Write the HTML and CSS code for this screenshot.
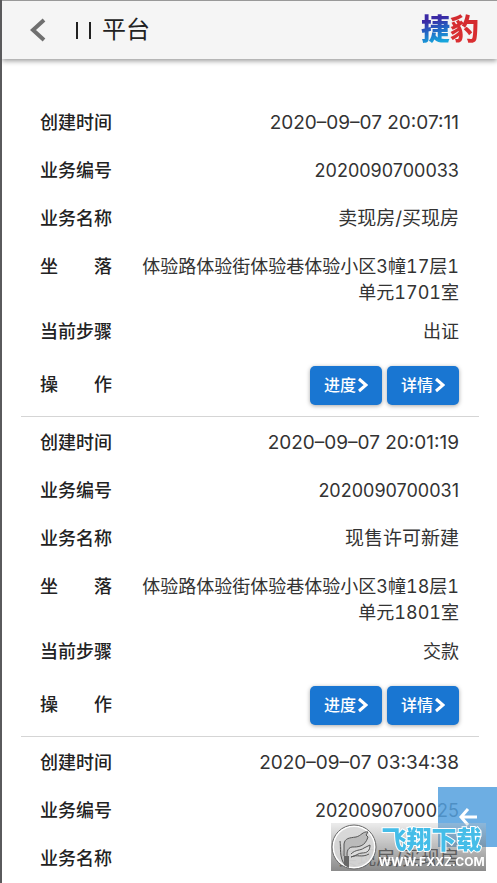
FILE: index.html
```html
<!DOCTYPE html>
<html lang="zh-CN">
<head>
<meta charset="utf-8">
<meta name="viewport" content="width=device-width, initial-scale=1">
<title>平台</title>
<link rel="stylesheet" href="styles.css">
</head>
<body>
<header class="bar">
  <button class="back" type="button" aria-label="返回">
    <svg width="16" height="24" viewBox="0 0 16 24"><path d="M14 2 L3 12 L14 22" fill="none" stroke="#707070" stroke-width="4"/></svg>
  </button>
  <h1 class="title"><svg width="18" height="18" viewBox="0 0 18 18" aria-hidden="true"><path d="M2 1V18M15 1V18" stroke="#222" stroke-width="2"/></svg>平台</h1>
  <div class="logo"><span class="logo-cool">捷</span><span class="logo-warm">豹</span></div>
</header>
<main class="list">
  <dl class="record">
    <div class="row"><dt>创建时间</dt><dd class="large">2020–09–07 20:07:11</dd></div>
    <div class="row"><dt>业务编号</dt><dd>2020090700033</dd></div>
    <div class="row"><dt>业务名称</dt><dd class="large">卖现房/买现房</dd></div>
    <div class="row address"><dt><span>坐</span><span>落</span></dt><dd>体验路体验街体验巷体验小区3幢17层1单元1701室</dd></div>
    <div class="row"><dt>当前步骤</dt><dd>出证</dd></div>
    <div class="row actions"><dt><span>操</span><span>作</span></dt><dd>
      <button class="btn" type="button">进度<svg width="10" height="16" viewBox="0 0 10 16"><path d="M1 2 L8 8 L1 14" /></svg></button>
      <button class="btn" type="button">详情<svg width="10" height="16" viewBox="0 0 10 16"><path d="M1 2 L8 8 L1 14" /></svg></button>
    </dd></div>
  </dl>
  <dl class="record">
    <div class="row"><dt>创建时间</dt><dd class="large">2020–09–07 20:01:19</dd></div>
    <div class="row"><dt>业务编号</dt><dd>2020090700031</dd></div>
    <div class="row"><dt>业务名称</dt><dd class="large">现售许可新建</dd></div>
    <div class="row address"><dt><span>坐</span><span>落</span></dt><dd>体验路体验街体验巷体验小区3幢18层1单元1801室</dd></div>
    <div class="row"><dt>当前步骤</dt><dd>交款</dd></div>
    <div class="row actions"><dt><span>操</span><span>作</span></dt><dd>
      <button class="btn" type="button">进度<svg width="10" height="16" viewBox="0 0 10 16"><path d="M1 2 L8 8 L1 14" /></svg></button>
      <button class="btn" type="button">详情<svg width="10" height="16" viewBox="0 0 10 16"><path d="M1 2 L8 8 L1 14" /></svg></button>
    </dd></div>
  </dl>
  <dl class="record">
    <div class="row"><dt>创建时间</dt><dd class="large">2020–09–07 03:34:38</dd></div>
    <div class="row"><dt>业务编号</dt><dd>2020090700025</dd></div>
    <div class="row"><dt>业务名称</dt><dd class="large">卖现房/买现房</dd></div>
  </dl>
</main>
<button class="float" type="button" aria-label="后退">
  <svg width="18" height="18" viewBox="0 0 18 18"><path d="M18 9H2M9 1L2 9L9 17" fill="none" stroke="#fff" stroke-width="3"/></svg>
</button>
<aside class="mark">
  <svg class="mark-logo" width="46" height="46" viewBox="0 0 46 46">
    <circle cx="23" cy="23" r="21" fill="#d8d8d8" fill-opacity=".9" stroke="#fff" stroke-width="2"/>
    <circle cx="23" cy="23" r="22" fill="none" stroke="#666" stroke-width="1"/>
    <path d="M9 17C10 23 8 34 14 41L17 36C15 29 16 24 21 23C27 23 34 23 37 13L35 11L37 8C32 7 30 12 25 13C18 14 14 14 13 20L13 32" fill="#bbb" stroke="#555"/>
    <path d="M20 30C25 25 29 27 33 24L39 21C39 27 36 29 31 29C27 29 25 32 20 33M20 33C26 30 31 34 38 30" fill="#ddd" stroke="#555"/>
    <path d="M13 32H18V44L13 41Z" fill="#666"/>
  </svg>
  <div class="mark-text"><strong>飞翔下载</strong><span>WWW.FXXZ.COM</span></div>
</aside>
</body>
</html>
```
FILE: styles.css
```css
* { box-sizing: border-box; }

body {
  margin: 0;
  min-height: 100vh;
  border-left: 2px solid #5a5a5c;
  background: #fff;
  color: #333;
  font: 18px/26px Inter, "Noto Sans CJK SC", sans-serif;
}

button { border: 0; padding: 0; font: inherit; }

.bar {
  display: flex;
  align-items: center;
  height: 59px;
  padding: 0 18px 0 28px;
  border-top: 1px solid #999;
  background: #f5f5f5;
  box-shadow: 0 2px 5px rgba(0, 0, 0, .4);
}

.back { display: flex; background: none; }

.title {
  display: flex;
  flex: 1;
  align-items: center;
  gap: 9px;
  margin: 0 0 0 29px;
  color: #222;
  font-size: 24px;
  font-weight: 400;
}

.logo {
  display: flex;
  font-size: 29px;
  font-weight: 900;
  line-height: 36px;
}

.logo span {
  background: linear-gradient(#d12a2f, #dc3032);
  background-clip: text;
  -webkit-background-clip: text;
  color: transparent;
}

.logo .logo-cool {
  background-image: linear-gradient(165deg, #3b2aa5 25%, #2366c4 50%, #16a5dc 80%);
}

.list { padding: 38px 18px 0 19px; }

.record {
  margin: 0;
  padding: 0 20px 0 19px;
  border-bottom: 1px solid #d5d5d5;
}

.record:last-child { border: 0; }

.row {
  display: flex;
  gap: 24px;
  min-height: 48px;
  padding-top: 13px;
}

.address { min-height: 65px; font-variant-numeric: tabular-nums; }

.actions { min-height: 62px; align-items: center; padding: 0; }

dt {
  display: flex;
  flex: none;
  justify-content: space-between;
  width: 72px;
  color: #222;
  font-weight: 500;
}

dd {
  flex: 1;
  margin: 0;
  text-align: right;
}

.large { font-size: 19px; }

.actions dd { display: flex; justify-content: flex-end; gap: 5px; }

.btn {
  display: flex;
  align-items: center;
  justify-content: center;
  gap: 2px;
  width: 72px;
  height: 39px;
  border-radius: 5px;
  background: #1976d2;
  box-shadow: 0 1px 4px rgba(0, 0, 0, .35);
  color: #fff;
  font-size: 16px;
  font-weight: 500;
}

.btn path { fill: none; stroke: #fff; stroke-width: 3; }

.float {
  position: fixed;
  right: 0;
  bottom: 36px;
  display: flex;
  align-items: center;
  justify-content: center;
  width: 59px;
  height: 60px;
  background: rgba(83, 160, 222, .85);
}

.mark {
  position: fixed;
  right: 11px;
  bottom: 12px;
  display: flex;
  align-items: center;
  width: 155px;
  height: 48px;
  background: linear-gradient(rgba(200, 200, 200, .35), rgba(100, 100, 100, .75));
}

.mark-text {
  display: flex;
  flex: 1;
  flex-direction: column;
  align-items: center;
  color: #fff;
}

.mark-text strong {
  color: #45bde8;
  font-size: 25px;
  font-weight: 900;
  line-height: 30px;
  -webkit-text-stroke: 2px #fff;
  paint-order: stroke fill;
}

.mark-text span {
  font-size: 12px;
  font-weight: 700;
  line-height: 14px;
}
```
